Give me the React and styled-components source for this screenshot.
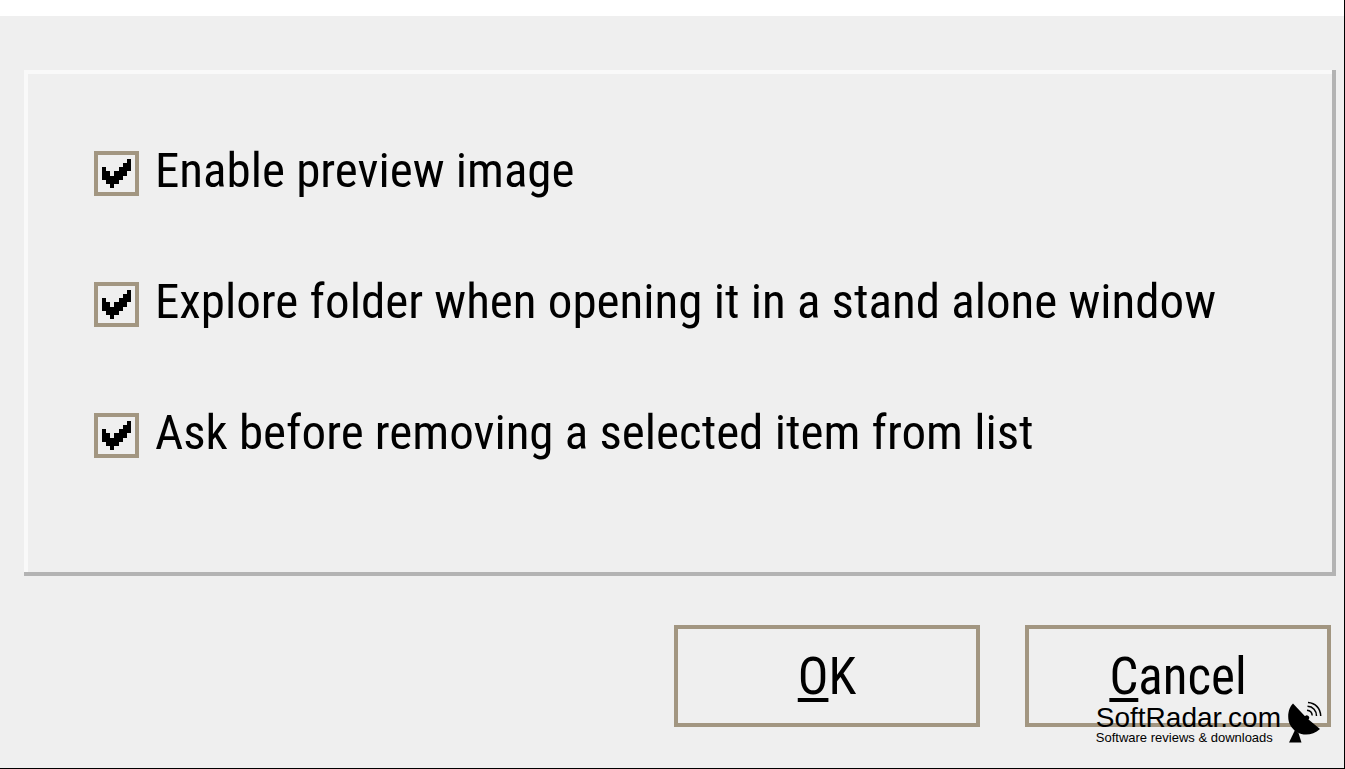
import React, { useState } from 'react';
import styled, { createGlobalStyle } from 'styled-components';

const options = [
  { id: 'preview', label: 'Enable preview image' },
  { id: 'explore', label: 'Explore folder when opening it in a stand alone window' },
  { id: 'ask', label: 'Ask before removing a selected item from list' },
];

const Option = ({ id, label }) => {
  const [checked, setChecked] = useState(true);

  return (
    <OptionRow>
      <CheckWrapper>
        <CheckInput
          type="checkbox"
          id={id}
          checked={checked}
          onChange={e => setChecked(e.target.checked)}
        />
        {checked ? (
          <CheckMark viewBox="0 0 7 7" shapeRendering="crispEdges" aria-hidden="true">
            <path d="M0 2h1v1h1v1h1v-1h1v-1h1v-1h1v-1h1v3h-1v1h-1v1h-1v1h-1v1h-1v-1h-1v-1h-1z" />
          </CheckMark>
        ) : null}
      </CheckWrapper>
      <OptionLabel htmlFor={id}>{label}</OptionLabel>
    </OptionRow>
  );
};

const Dish = () => (
  <DishIcon viewBox="0 0 34 44" aria-hidden="true">
    <path d="M5 2.5C0 7-1.500 18 2.500 24.500C8 34.500 22 37 32 28L20.500 18.500A2.300 2.300 0 1 0 17 15.200Z" />
    <path d="M7 29L10.500 32L13.500 41.500H1Z" />
    <path
      d="M19 9.300C22 9.500 24 11.500 24.200 14.500M19.500 5.300C25 5.500 28.500 9.500 28.500 15M20 1.500C27.500 2 32.500 7.500 32.700 15"
      fill="none"
      stroke="#000"
      strokeWidth="1.500"
    />
  </DishIcon>
);

const App = () => (
  <Page>
    <GlobalStyle />
    <TitleStrip />
    <Dialog>
      <Panel>
        {options.map(option => (
          <Option key={option.id} {...option} />
        ))}
      </Panel>
      <Actions>
        <Button type="button">
          <Mnemonic>O</Mnemonic>K
        </Button>
        <Button type="button">
          <Mnemonic>C</Mnemonic>ancel
        </Button>
      </Actions>
    </Dialog>
    <Watermark>
      <div>
        <Brand>SoftRadar.com</Brand>
        <Tagline>Software reviews &amp; downloads</Tagline>
      </div>
      <Dish />
    </Watermark>
  </Page>
);

const GlobalStyle = createGlobalStyle`
  *,
  *::before,
  *::after {
    box-sizing: border-box;
  }

  body {
    margin: 0;
    background: #efefef;
    color: #000;
    font-family: 'Roboto Condensed', Roboto, sans-serif;
  }
`;

const Page = styled.div`
  position: relative;
  min-height: 100vh;
  display: flex;
  flex-direction: column;
  border-right: 1px solid #000;
  border-bottom: 1px solid #000;
`;

const TitleStrip = styled.header`
  height: 16px;
  background: #fff;
`;

const Dialog = styled.main`
  flex: 1;
  padding: 54px 8px 40px 24px;
`;

const Panel = styled.section`
  display: flex;
  flex-direction: column;
  gap: 86px;
  padding: 81px 16px 114px 70px;
  border-right: 4px solid #b3b3b3;
  border-bottom: 4px solid #b3b3b3;
  box-shadow: inset 4px 4px 0 #f9f9f9;
`;

const OptionRow = styled.div`
  display: flex;
  align-items: flex-start;
  gap: 16px;
  height: 45px;
`;

const CheckWrapper = styled.span`
  display: grid;
  flex: none;
  place-items: center;
  width: 45px;
  height: 45px;
`;

const CheckInput = styled.input`
  grid-area: 1 / 1;
  appearance: none;
  width: 45px;
  height: 45px;
  margin: 0;
  border: 4px solid #a29681;
`;

const CheckMark = styled.svg`
  grid-area: 1 / 1;
  width: 29px;
  height: 29px;
  pointer-events: none;
`;

const OptionLabel = styled.label`
  font-size: 49px;
  line-height: 40px;
  white-space: nowrap;
`;

const Actions = styled.div`
  display: flex;
  justify-content: flex-end;
  gap: 45px;
  margin-top: 49px;
  padding-right: 5px;
`;

const Button = styled.button`
  width: 306px;
  height: 102px;
  padding: 0;
  border: 4px solid #a29681;
  background: transparent;
  color: inherit;
  font-family: inherit;
  font-size: 51px;
`;

const Mnemonic = styled.span`
  text-decoration: underline;
  text-decoration-thickness: 4px;
  text-underline-offset: 4px;
`;

const Watermark = styled.aside`
  position: absolute;
  right: 22px;
  bottom: 23px;
  display: flex;
  align-items: flex-end;
  gap: 7px;
  font-family: 'Liberation Sans', Arial, sans-serif;
`;

const Brand = styled.div`
  font-size: 28px;
  line-height: 26px;
`;

const Tagline = styled.div`
  font-size: 13px;
  line-height: 14px;
`;

const DishIcon = styled.svg`
  width: 34px;
  height: 44px;
`;

export default App;
